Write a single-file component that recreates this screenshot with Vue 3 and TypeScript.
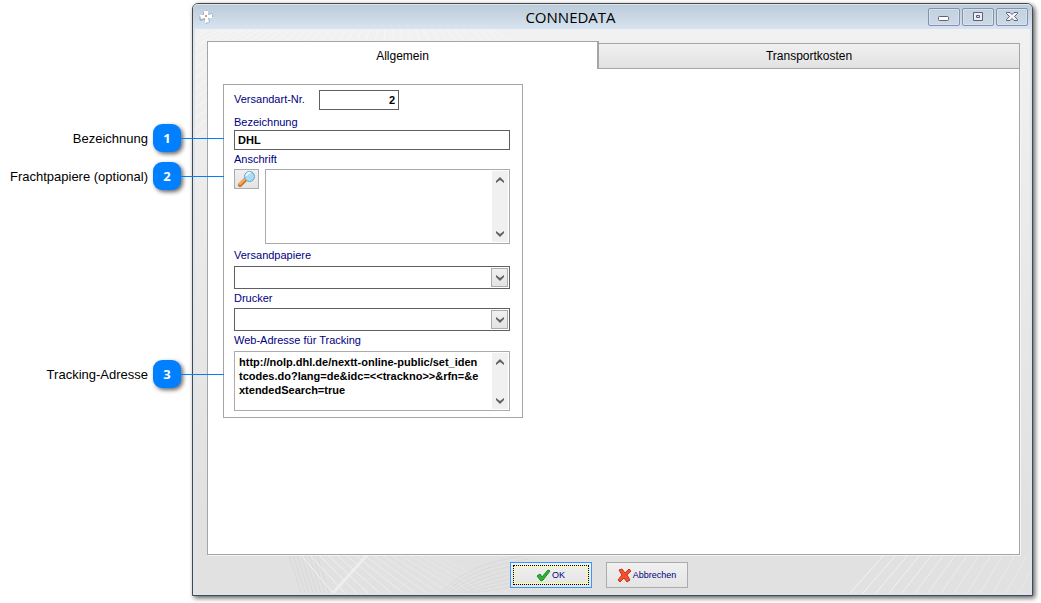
<script setup lang="ts">
import { ref } from 'vue'

interface Callout {
  id: number
  label: string
}

const callouts: Callout[] = [
  { id: 1, label: 'Bezeichnung' },
  { id: 2, label: 'Frachtpapiere (optional)' },
  { id: 3, label: 'Tracking-Adresse' },
]

const number = ref('2')
const title = ref('DHL')
const address = ref('')
const papers = ref('')
const printer = ref('')
const tracking = ref(
  'http://nolp.dhl.de/nextt-online-public/set_identcodes.do?lang=de&idc=<<trackno>>&rfn=&extendedSearch=true',
)

const steps = (count: number, gap: number): number[] => Array.from({ length: count }, (_, i) => i * gap)
const topLines = steps(36, 9)
const sideLines = steps(11, 10)
const bottomLines = steps(15, 13)
const waveLines = steps(16, 9)
const shadeLines = steps(8, 4)
</script>

<template>
  <div class="page">
    <aside class="callouts">
      <div v-for="c in callouts" :key="c.id" class="callout" :class="'callout-' + c.id">
        <span>{{ c.label }}</span>
        <span class="badge">{{ c.id }}</span>
      </div>
    </aside>

    <section class="window">
      <header class="titlebar">
        <svg class="app-icon" width="14" height="16" viewBox="0 0 14 16" aria-hidden="true">
          <path d="M4 3 8 1l1 4 4-1 1 4-4 1 1 4-4 2-2-4-4 1-1-4 4-2z" fill="#9fb5c6" />
          <path d="M5 2h4v4l4-1v4H9l1 4-4 1V9L2 10 1 6h4z" fill="#fff" />
          <circle cx="7" cy="7" r="1" fill="#e87530" />
        </svg>
        <h1>CONNEDATA</h1>
        <div class="controls">
          <button type="button" aria-label="Minimieren">
            <svg width="12" height="12" viewBox="0 0 12 12"><rect x=".5" y="5.500" width="10" height="4" rx="1" fill="#fff" stroke="#59617c" /></svg>
          </button>
          <button type="button" aria-label="Maximieren">
            <svg width="12" height="12" viewBox="0 0 12 12"><path d="M1.500 1.500h9v8h-9z" fill="#eee" stroke="#59617c" /><path d="M4.500 4.500h3v2h-3z" fill="#cbd7e4" stroke="#59617c" /></svg>
          </button>
          <button type="button" aria-label="Schließen">
            <svg width="12" height="12" viewBox="0 0 12 12"><path d="M.5 1.500h3.500l2 2 2-2h3.500v1L8.500 5.500l3 3v1H8l-2-2-2 2H.5v-1l3-3-3-3z" fill="#f4f4f4" stroke="#59617c" /></svg>
          </button>
        </div>
      </header>

      <div class="body">
        <svg class="deco deco-top" width="400" height="12" aria-hidden="true">
          <path v-for="x in topLines" :key="x" :d="`M${x} 12L${x + 28 - x / 7} 0`" stroke="#fff" stroke-opacity=".4" />
        </svg>
        <svg class="deco deco-left" width="12" height="120" aria-hidden="true">
          <path v-for="y in sideLines" :key="y" :d="`M0 ${y + 10}L12 ${y}`" stroke="#fff" stroke-opacity=".5" />
        </svg>
        <svg class="deco deco-wave" width="240" height="38" aria-hidden="true">
          <path v-for="x in shadeLines" :key="'s' + x" :d="`M${x} 0L${x + 12} 38`" stroke="#d9d9d9" />
          <path v-for="x in waveLines" :key="'w' + x" :d="`M${x + 12} 0L${x * 1.3 + 44} 38`" stroke="#fff" :stroke-opacity="0.6 - x / 300" />
          <path d="M78 0 44 38" stroke="#eee" stroke-width="3" />
          <path v-for="x in shadeLines" :key="'c' + x" :d="`M${152 + x} 38Q${178 + x} ${8 + x} 240 ${x}`" fill="none" stroke="#d9d9d9" />
        </svg>
        <svg class="deco deco-bottom" width="180" height="38" aria-hidden="true">
          <path v-for="x in bottomLines" :key="x" :d="`M${x} 38L${x + 34 - x / 12} 0`" stroke="#fff" :stroke-opacity="0.6 - x / 500" />
        </svg>

        <div class="tabs" role="tablist">
          <button type="button" role="tab" aria-selected="true" class="tab active">Allgemein</button>
          <button type="button" role="tab" aria-selected="false" class="tab">Transportkosten</button>
        </div>
        <main class="panel">
          <form class="group" @submit.prevent>
            <div class="number-row">
              <label for="nr">Versandart-Nr.</label>
              <input id="nr" v-model="number" class="field number" type="text" />
            </div>
            <label for="bez">Bezeichnung</label>
            <input id="bez" v-model="title" class="field" type="text" />
            <label for="addr" class="label-address">Anschrift</label>
            <div class="address-row">
              <button type="button" class="search" aria-label="Anschrift suchen">
                <svg width="20" height="18" viewBox="0 0 20 18">
                  <path d="m3 15 6-6" stroke="#c67634" stroke-width="4" stroke-linecap="round" />
                  <path d="m3 14 5-5" stroke="#ffad4c" stroke-width="2" stroke-linecap="round" />
                  <circle cx="12.500" cy="6.500" r="5" fill="#a8ddf6" stroke="#6d9fc5" />
                  <path d="M9.500 6a3 3 0 0 1 4-3" fill="none" stroke="#e9faff" stroke-width="2" />
                </svg>
              </button>
              <div class="memo memo-tall">
                <textarea id="addr" v-model="address"></textarea>
                <div class="scroll">
                  <button type="button" aria-label="Nach oben"><svg width="8" height="6" viewBox="0 0 8 6"><path d="M0 4l4-4 4 4v2L4 3 0 6z" fill="#606060" /></svg></button>
                  <button type="button" aria-label="Nach unten"><svg width="8" height="6" viewBox="0 0 8 6"><path d="M0 2l4 4 4-4V0L4 3 0 0z" fill="#606060" /></svg></button>
                </div>
              </div>
            </div>
            <label for="papers" class="label-papers">Versandpapiere</label>
            <div class="combo">
              <select id="papers" v-model="papers"><option value=""></option></select>
              <span class="drop"><svg width="8" height="6" viewBox="0 0 8 6"><path d="M0 2l4 4 4-4V0L4 3 0 0z" fill="#606060" /></svg></span>
            </div>
            <label for="printer" class="label-printer">Drucker</label>
            <div class="combo">
              <select id="printer" v-model="printer"><option value=""></option></select>
              <span class="drop"><svg width="8" height="6" viewBox="0 0 8 6"><path d="M0 2l4 4 4-4V0L4 3 0 0z" fill="#606060" /></svg></span>
            </div>
            <label for="track" class="label-track">Web-Adresse für Tracking</label>
            <div class="memo memo-short">
              <textarea id="track" v-model="tracking" spellcheck="false"></textarea>
              <div class="scroll">
                <button type="button" aria-label="Nach oben"><svg width="8" height="6" viewBox="0 0 8 6"><path d="M0 4l4-4 4 4v2L4 3 0 6z" fill="#606060" /></svg></button>
                <button type="button" aria-label="Nach unten"><svg width="8" height="6" viewBox="0 0 8 6"><path d="M0 2l4 4 4-4V0L4 3 0 0z" fill="#606060" /></svg></button>
              </div>
            </div>
          </form>
        </main>
        <footer class="actions">
          <button type="button" class="action default">
            <svg width="15" height="13" viewBox="0 0 15 13"><path d="M1 7l3-2 2 3 6-7 2 1-7 9-2 1z" fill="#2fb52f" stroke="#168a1c" stroke-linejoin="round" /></svg>
            <span>OK</span>
          </button>
          <button type="button" class="action">
            <svg width="15" height="15" viewBox="0 0 15 15"><path d="M2 2l3-1 3 4 4-4 2 2-4 4 3 5-3 2-3-4-4 4-2-2 4-5z" fill="#f4512c" stroke="#c9301c" stroke-linejoin="round" /></svg>
            <span>Abbrechen</span>
          </button>
        </footer>
      </div>
    </section>
  </div>
</template>

<style>
body {
  margin: 0;
  background: #fff;
}
</style>

<style scoped>
* {
  box-sizing: border-box;
}
button,
input,
textarea,
select {
  font: inherit;
  color: inherit;
  margin: 0;
  padding: 0;
  border-radius: 0;
  outline: none;
}
svg {
  display: block;
  flex: none;
}
.page {
  display: flex;
  min-height: 100vh;
  padding: 3px 8px 7px 0;
  font-family: "Liberation Sans", Arial, sans-serif;
  font-size: 11px;
  color: #000;
}
.callouts {
  flex: none;
  width: 192px;
  padding: 121px 11px 0 0;
  position: relative;
  z-index: 1;
}
.callout {
  position: relative;
  display: flex;
  justify-content: flex-end;
  align-items: center;
  gap: 5px;
  height: 28px;
  margin-bottom: 10px;
  font-size: 13px;
  white-space: nowrap;
}
.callout-3 {
  margin-top: 170px;
}
.callout::after {
  content: "";
  position: absolute;
  left: 100%;
  top: 14px;
  width: 43px;
  height: 1px;
  background: #0080ff;
}
.badge {
  width: 28px;
  height: 28px;
  border-radius: 9px;
  background: #0080ff;
  color: #fff;
  font: bold 13px/28px "Open Sans", sans-serif;
  text-align: center;
  box-shadow: 2px 2px 4px rgba(0, 0, 0, 0.6);
}
.window {
  flex: 1;
  display: flex;
  flex-direction: column;
  border: 1px solid #484848;
  border-radius: 6px 6px 0 0;
  background: #d9e5f2;
  box-shadow: 2px 2px 5px rgba(0, 0, 0, 0.65);
}
.titlebar {
  display: flex;
  align-items: center;
  height: 25px;
  padding: 0 4px 0 6px;
  border-top: 1px solid #dce6ef;
  border-radius: 5px 5px 0 0;
  background: linear-gradient(#bccbd9, #d7e4f1);
}
h1 {
  flex: 1;
  margin: 0;
  font: 15px/24px "Open Sans", sans-serif;
  text-align: center;
}
.controls {
  display: flex;
  gap: 2px;
}
.controls button {
  width: 32px;
  height: 18px;
  display: flex;
  align-items: center;
  justify-content: center;
  border: 1px solid #8391ad;
  border-radius: 2px;
  background: linear-gradient(#c3d1df, #ced9e6);
  box-shadow: inset 0 0 0 1px #d7e2ed;
}
.body {
  position: relative;
  flex: 1;
  display: flex;
  flex-direction: column;
  margin: 0 2px 2px;
  padding: 12px 10px 0 12px;
  background: linear-gradient(#f1f1f1, #e1e1e1 85%);
}
.deco {
  position: absolute;
}
.deco-top,
.deco-left {
  top: 0;
  left: 0;
}
.deco-wave {
  left: 94px;
  bottom: 0;
}
.deco-bottom {
  right: 0;
  bottom: 0;
}
.tabs {
  position: relative;
  display: flex;
  align-items: flex-end;
  height: 28px;
}
.tab {
  flex: 422;
  height: 26px;
  border: 1px solid #a5a5a5;
  border-left-width: 0;
  background: linear-gradient(#f0f0f0, #e2e2e2);
  font-size: 12px;
}
.tab.active {
  flex: 391;
  height: 28px;
  border-width: 1px 2px 0 1px;
  background: #fff;
}
.panel {
  position: relative;
  flex: 1;
  padding: 15px;
  border: 1px solid #a5a5a5;
  border-top: 0;
  background: #fff;
  box-shadow: 1px 1px #f4f4f4;
}
.group {
  display: flex;
  flex-direction: column;
  width: 300px;
  padding: 5px 12px 6px 10px;
  border: 1px solid #a5a5a5;
}
label {
  line-height: 14px;
  color: #000080;
}
.number-row {
  display: flex;
  align-items: flex-start;
  gap: 14px;
  height: 20px;
  margin-bottom: 5px;
}
.number-row label {
  width: 71px;
  padding-top: 2px;
  white-space: nowrap;
}
.field {
  height: 20px;
  margin-top: 1px;
  padding: 0 3px;
  border: 1px solid #606060;
  background: #fff;
  font-weight: bold;
}
.field.number {
  width: 80px;
  margin-top: 0;
  text-align: right;
}
.label-address {
  margin: 2px 0 3px;
}
.address-row {
  display: flex;
  align-items: flex-start;
  gap: 6px;
}
.search {
  width: 25px;
  height: 20px;
  display: flex;
  align-items: center;
  justify-content: center;
  border: 1px solid #acacac;
  background: linear-gradient(#f0f0f0, #e3e3e3);
}
.memo {
  display: flex;
  flex: 1;
  padding: 1px;
  border: 1px solid #ababab;
  background: #fff;
}
.memo textarea {
  flex: 1;
  min-width: 0;
  border: 0;
  padding: 2px 12px 0 3px;
  background: #fff;
  font-weight: bold;
  line-height: 14px;
  word-break: break-all;
  resize: none;
  overflow: hidden;
}
.memo-tall {
  height: 75px;
}
.memo-short {
  flex: none;
  height: 60px;
}
.scroll {
  display: flex;
  flex-direction: column;
  justify-content: space-between;
  width: 16px;
  background: #f0f0f0;
}
.scroll button {
  height: 17px;
  display: flex;
  align-items: center;
  justify-content: center;
  border: 0;
  background: none;
}
.label-papers {
  margin: 4px 0;
}
.label-printer {
  margin: 2px 0 3px;
}
.label-track {
  margin: 2px 0 4px;
}
.combo {
  position: relative;
  height: 23px;
}
.combo select {
  display: block;
  width: 100%;
  height: 100%;
  border: 1px solid #606060;
  background: #fff;
  appearance: none;
}
.drop {
  position: absolute;
  top: 2px;
  right: 2px;
  bottom: 2px;
  width: 17px;
  display: flex;
  align-items: center;
  justify-content: center;
  border: 1px solid #acacac;
  background: linear-gradient(#f0f0f0, #e3e3e3);
  pointer-events: none;
}
.actions {
  position: relative;
  display: flex;
  justify-content: center;
  gap: 14px;
  padding: 7px 0 5px;
  margin-right: 30px;
}
.action {
  width: 82px;
  height: 26px;
  display: flex;
  align-items: center;
  justify-content: center;
  gap: 1px;
  border: 1px solid #acacac;
  background: linear-gradient(#f0f0f0, #e4e4e4);
  color: #000080;
  font-size: 9px;
}
.action.default {
  position: relative;
  border-color: #3399ff;
}
.action.default::after {
  content: "";
  position: absolute;
  inset: 2px;
  border: 1px dotted #000;
  box-shadow: inset 0 0 0 1px #fbfb9c;
}
</style>
